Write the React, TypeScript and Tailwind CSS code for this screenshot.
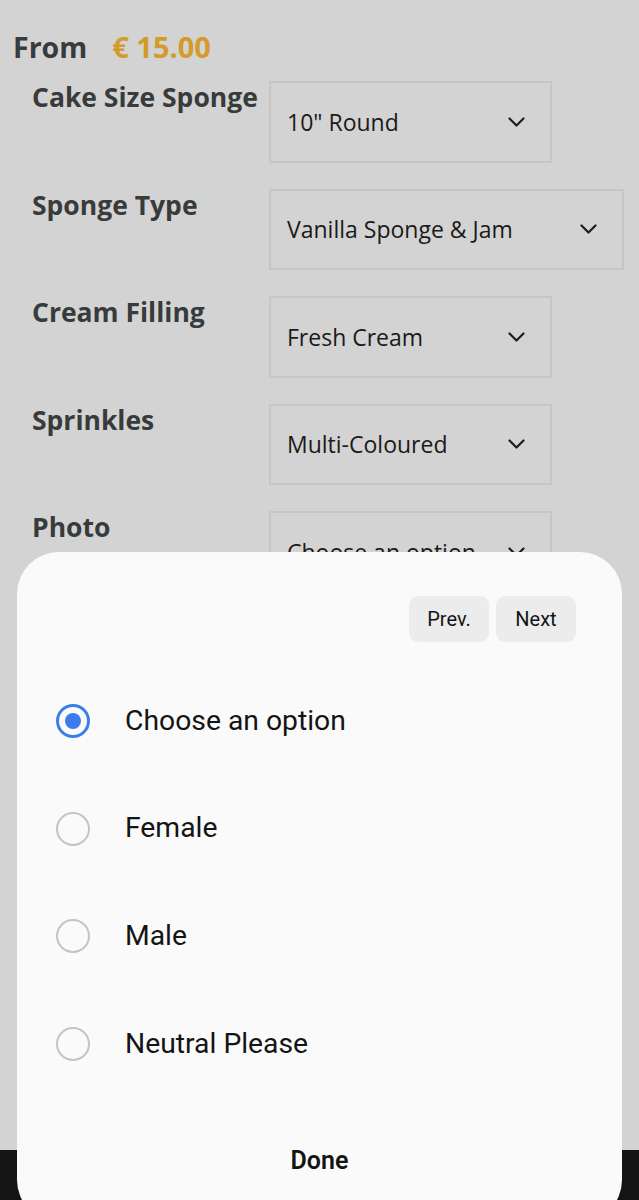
import React from "react";

const rows = [
  { label: "Cake Size Sponge", value: "10\" Round", wide: false },
  { label: "Sponge Type", value: "Vanilla Sponge & Jam", wide: true },
  { label: "Cream Filling", value: "Fresh Cream", wide: false },
  { label: "Sprinkles", value: "Multi-Coloured", wide: false },
  { label: "Photo", value: "Choose an option", wide: false },
];

const options = ["Choose an option", "Female", "Male", "Neutral Please"];

function Chevron() {
  return (
    <svg width="17" height="10" viewBox="0 0 17 10" fill="none" className="shrink-0">
      <polyline
        points="1.5,1.5 8.5,8.5 15.5,1.5"
        stroke="#1c1c1c"
        strokeWidth="2.2"
        strokeLinecap="round"
        strokeLinejoin="round"
      />
    </svg>
  );
}

function Radio({ checked }: { checked: boolean }) {
  if (checked) {
    return (
      <span className="flex h-[34px] w-[34px] shrink-0 items-center justify-center rounded-full border-[3.5px] border-[#3c7ded]">
        <span className="h-[16px] w-[16px] rounded-full bg-[#3c7ded]" />
      </span>
    );
  }
  return <span className="h-[34px] w-[34px] shrink-0 rounded-full border-[2.5px] border-[#c4c4c4]" />;
}

export default function App() {
  return (
    <div className="relative h-[1200px] w-[639px] overflow-hidden bg-[#d3d3d3]">
      {/* Product options (dimmed page) */}
      <div className="font-['Open_Sans',sans-serif] pt-[31px]">
        <div className="flex items-baseline pl-[13px] leading-[32px]">
          <span className="text-[28.5px] font-bold text-[#373b3c]">From</span>
          <span className="ml-[25px] text-[29px] font-bold text-[#d39b2a]">€ 15.00</span>
        </div>

        <div className="mt-[18px] flex flex-col gap-[26px]">
          {rows.map((r) => (
            <div key={r.label} className="flex items-start">
              <div className="w-[269px] shrink-0 pl-[32px] text-[26.5px] font-bold leading-[32px] text-[#373b3c]">
                {r.label}
              </div>
              <div
                className={`flex h-[81.5px] items-center justify-between border-2 border-[#c6c6c6] pl-[16px] pr-[25px] ${
                  r.wide ? "w-[355px]" : "w-[283px]"
                }`}
              >
                <span className="text-[23px] text-[#1a1a1a]">{r.value}</span>
                <Chevron />
              </div>
            </div>
          ))}
        </div>
      </div>

      {/* Bottom bar behind the sheet */}
      <div className="absolute bottom-0 left-0 h-[50px] w-full bg-[#141414]" />

      {/* Bottom sheet */}
      <div className="absolute left-[17px] top-[552px] h-[670px] w-[605px] rounded-[42px] bg-[#fafafa] font-['Roboto',sans-serif]">
        <div className="flex justify-end gap-[7px] pr-[46px] pt-[44px]">
          <button className="h-[46px] w-[80px] rounded-[9px] bg-[#ececec] text-[20px] text-[#141414]">Prev.</button>
          <button className="h-[46px] w-[80px] rounded-[9px] bg-[#ececec] text-[20px] text-[#141414]">Next</button>
        </div>

        <div className="mt-[25px] flex flex-col">
          {options.map((o, i) => (
            <div key={o} className="flex h-[107.7px] items-center gap-[35px] pl-[39px]">
              <Radio checked={i === 0} />
              <span className="text-[28.3px] text-[#141414]">{o}</span>
            </div>
          ))}
        </div>

        <div className="mt-[33px] text-center text-[25px] font-semibold leading-[60px] text-[#141414]">Done</div>
      </div>
    </div>
  );
}
